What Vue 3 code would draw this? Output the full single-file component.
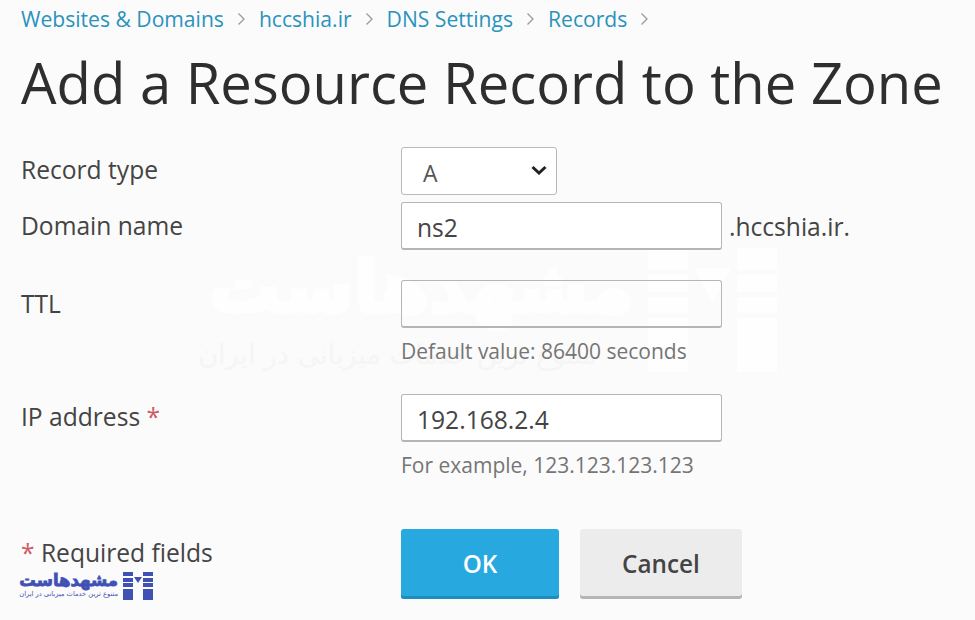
<script setup>
const crumbs = ['Websites & Domains', 'hccshia.ir', 'DNS Settings', 'Records']
</script>

<template>
  <div class="page">
    <nav class="crumbs">
      <template v-for="c in crumbs" :key="c">
        <a class="crumb">{{ c }}</a>
        <svg class="sep" width="9" height="14" viewBox="0 0 9 14"><path d="M1.500 1.500 7 7l-5.500 5.500" fill="none" stroke="#9a9a9a" stroke-width="1.300"/></svg>
      </template>
    </nav>
    <h1 class="title">Add a Resource Record to the Zone</h1>

    <div class="watermark" aria-hidden="true">
      <div class="wm-text">
        <div class="wm-name" dir="rtl">مشهدهاست</div>
        <div class="wm-sub" dir="rtl">متنوع ترین خدمات میزبانی در ایران</div>
      </div>
      <svg class="wm-icon" width="129" height="124" viewBox="0 0 129 124" fill="#ffffff">
        <path d="M0 0h40v22H0zM0 27h40v17H0zM0 49h40v16H0zM0 70h40v54H0zM89 0h40v22H89zM89 27h40v17H89zM89 49h40v16H89zM89 70h40v54H89zM46 20h37L65 55z"/>
      </svg>
    </div>

    <form class="form">
      <div class="row row-type">
        <label class="label">Record type</label>
        <div class="field">
          <div class="select">
            <span>A</span>
            <svg width="16" height="10" viewBox="0 0 16 10"><path d="M1.500 2 8 8l6.500-6" fill="none" stroke="#222" stroke-width="3"/></svg>
          </div>
        </div>
      </div>
      <div class="row row-domain">
        <label class="label">Domain name</label>
        <div class="field inline">
          <div class="input">ns2</div>
          <span class="suffix">.hccshia.ir.</span>
        </div>
      </div>
      <div class="row row-ttl">
        <label class="label">TTL</label>
        <div class="field">
          <div class="input clear"></div>
          <div class="hint">Default value: 86400 seconds</div>
        </div>
      </div>
      <div class="row row-ip">
        <label class="label">IP address <span class="req">*</span></label>
        <div class="field">
          <div class="input">192.168.2.4</div>
          <div class="hint">For example, 123.123.123.123</div>
        </div>
      </div>
      <div class="row row-actions">
        <div class="label"><span class="req">*</span> Required fields</div>
        <div class="field buttons">
          <button type="button" class="btn ok">OK</button>
          <button type="button" class="btn cancel">Cancel</button>
        </div>
      </div>
    </form>

    <div class="logo">
      <div class="logo-text">
        <div class="logo-name" dir="rtl">مشهدهاست</div>
        <div class="logo-sub" dir="rtl">متنوع ترین خدمات میزبانی در ایران</div>
      </div>
      <svg width="30" height="28" viewBox="0 0 30 28" fill="#3f51b5">
        <path d="M0 0h10v4H0zM0 6h10v4H0zM0 11h10v4H0zM0 17h10v11H0zM20 0h10v4H20zM20 6h10v4H20zM20 11h10v4H20zM20 17h10v11H20zM11 5h8l-4 6z"/>
      </svg>
    </div>
  </div>
</template>

<style scoped>
.page {
  position: relative;
  width: 975px;
  height: 620px;
  overflow: hidden;
  background: #fbfbfb;
  color: #444;
  font-family: "Open Sans", "DejaVu Sans", sans-serif;
  font-size: 24.600px;
}
.crumbs {
  display: flex;
  align-items: center;
  gap: 13px;
  height: 37px;
  padding-left: 21px;
  font-size: 21.100px;
}
.crumb { color: #2a93bd; }
.sep { flex: none; }
.title {
  margin: 6px 0 0 21px;
  font-size: 56.200px;
  font-weight: 400;
  line-height: 78px;
  color: #2e2e2e;
  white-space: nowrap;
}
.form {
  position: absolute;
  inset: 147px 0 auto 21px;
}
.row {
  display: grid;
  grid-template-columns: 380px 1fr;
}
.label { line-height: 46px; }
.row-type { height: 55px; }
.row-domain { height: 78px; }
.row-ttl { height: 114px; }
.row-ip { height: 135px; }
.row-domain .label { line-height: 48px; }
.row-ttl .label { line-height: 48px; }
.inline { display: flex; align-items: flex-start; gap: 7px; }
.select {
  position: relative;
  box-sizing: border-box;
  display: flex;
  align-items: center;
  justify-content: space-between;
  width: 156px;
  height: 48px;
  padding: 4px 9px 0 21px;
  background: #fff;
  border: 1.500px solid #b9b9b9;
  border-radius: 3px;
  font-size: 23px;
  color: #555;
}
.select svg { margin-top: -6px; }
.input {
  position: relative;
  box-sizing: border-box;
  width: 321px;
  height: 48px;
  padding: 0 15px;
  line-height: 49px;
  background: #fff;
  border: 1.500px solid #b5b5b5;
  border-bottom-width: 2px;
  border-radius: 3px;
}
.input.clear { background: transparent; }
.suffix { position: relative; line-height: 50px; }
.hint {
  position: relative;
  margin-top: 9px;
  font-size: 21px;
  line-height: 28px;
  color: #757575;
}
.req { color: #cf5a66; }
.row-actions .label { line-height: 48px; }
.buttons { display: flex; gap: 21px; }
.btn {
  box-sizing: border-box;
  height: 70px;
  border: none;
  border-radius: 3px;
  font-family: inherit;
  font-size: 24.300px;
  font-weight: 600;
  padding: 0 0 2px;
}
.ok {
  width: 158px;
  background: #27a9e0;
  color: #fff;
  box-shadow: inset 0 -3px 0 #1d8fbf;
}
.cancel {
  width: 162px;
  background: #ececec;
  color: #444;
  box-shadow: inset 0 -3px 0 #b5b5b5;
}
.watermark {
  position: absolute;
  left: 200px;
  top: 248px;
  display: flex;
  gap: 14px;
}
.wm-text { width: 434px; color: #fff; opacity: 0.85; }
.wm-name {
  margin-top: 2px;
  font-family: "DejaVu Sans", sans-serif;
  font-size: 71px;
  font-weight: 700;
  line-height: 76px;
  white-space: nowrap;
  -webkit-text-stroke: 4px #fff;
}
.wm-sub {
  margin-top: 14px;
  padding-right: 37px;
  font-family: "DejaVu Sans", sans-serif;
  font-size: 27px;
  line-height: 30px;
  color: #f5f5f6;
  white-space: nowrap;
}
.wm-icon { opacity: 0.75; }
.logo {
  position: absolute;
  left: 20px;
  top: 571px;
  display: flex;
  gap: 5px;
}
.logo-text { width: 98px; color: #3f51b5; }
.logo-name {
  font-family: "DejaVu Sans", sans-serif;
  font-size: 16.500px;
  font-weight: 700;
  line-height: 19px;
  white-space: nowrap;
  -webkit-text-stroke: 0.800px #3f51b5;
}
.logo-sub {
  font-family: "DejaVu Sans", sans-serif;
  font-size: 6.700px;
  line-height: 9px;
  white-space: nowrap;
}
.logo svg { margin-top: 1px; }
</style>
